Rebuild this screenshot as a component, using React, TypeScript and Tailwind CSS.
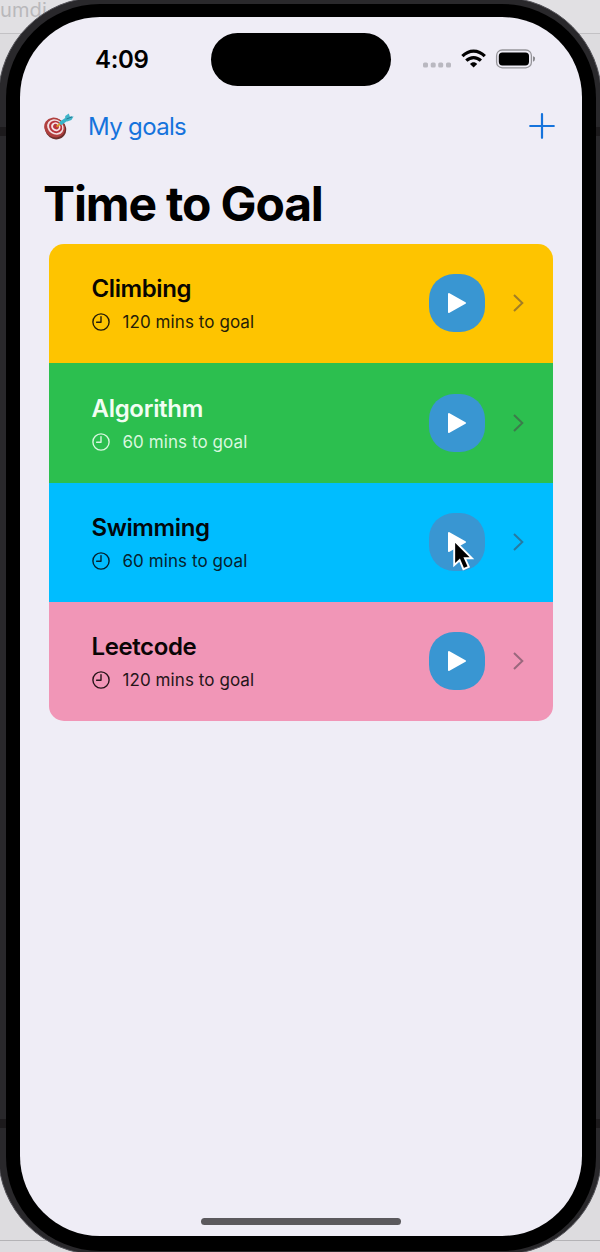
type Goal = {
  name: string;
  minutes: number;
  row: string;
  text: string;
  title: string;
};

const goals: Goal[] = [
  { name: "Climbing", minutes: 120, row: "h-[119px] bg-[#fec400]", text: "text-[#251d08]", title: "text-[#080602] tracking-[-0.4px]" },
  { name: "Algorithm", minutes: 60, row: "h-[120px] bg-[#2cbf4f]", text: "text-[#d9f7df]", title: "text-[#f2fdf3] tracking-[-0.3px]" },
  { name: "Swimming", minutes: 60, row: "h-[119px] bg-[#00bdff]", text: "text-[#06222e]", title: "text-[#02080c] tracking-[-0.4px]" },
  { name: "Leetcode", minutes: 120, row: "h-[119px] bg-[#f196b7]", text: "text-[#251519]", title: "text-[#0a0506] tracking-[-0.4px]" },
];

function TargetIcon() {
  return (
    <svg width="32" height="28" viewBox="0 0 32 28">
      <ellipse cx="12.6" cy="16" rx="10.8" ry="10.2" transform="rotate(35 12.6 16)" fill="#6d2f2c" />
      <ellipse cx="11.6" cy="14.6" rx="10.8" ry="9.6" transform="rotate(35 11.6 14.6)" fill="#b0403f" />
      <ellipse cx="12.4" cy="14" rx="8.6" ry="7.4" transform="rotate(35 12.4 14)" fill="#f3dfe2" />
      <ellipse cx="12.6" cy="13.9" rx="6.9" ry="5.9" transform="rotate(35 12.6 13.9)" fill="#b8343c" />
      <ellipse cx="12.8" cy="13.8" rx="4.9" ry="4.2" transform="rotate(35 12.8 13.8)" fill="#f5e3e6" />
      <ellipse cx="13" cy="13.7" rx="3" ry="2.5" transform="rotate(35 13 13.7)" fill="#b8343c" />
      <path d="M13.6 13.8L18.5 9.8" stroke="#d99a2b" strokeWidth="1.8" />
      <path d="M17 10.8L25 5.2" stroke="#35b4c9" strokeWidth="3.6" />
      <path d="M22.2 7L22.2 3L25.8 .6L26.8 3.4L30.6 3.4L28.4 7L24.2 8.4Z" fill="#3fb4c9" />
      <path d="M23.5 6L29 3.9" stroke="#246f8b" strokeWidth="0.9" />
    </svg>
  );
}

function ClockIcon() {
  return (
    <svg width="18" height="18" viewBox="0 0 18 18" fill="none" stroke="currentColor" strokeWidth="1.4" strokeLinecap="round" strokeLinejoin="round">
      <circle cx="9" cy="9" r="8.1" />
      <path d="M9 3.6V9.3H4.6" />
    </svg>
  );
}

function StatusIcons() {
  return (
    <svg width="114" height="22" viewBox="0 0 114 22">
      <g fill="#b9b8c0">
        <rect x="1" y="14.5" width="5" height="5" rx="1.6" />
        <rect x="8.7" y="14.5" width="5" height="5" rx="1.6" />
        <rect x="16.2" y="14.5" width="5" height="5" rx="1.6" />
        <rect x="24" y="14.5" width="5" height="5" rx="1.6" />
      </g>
      <g fill="none" stroke="#000" strokeWidth="3.2">
        <path d="M40.4 8.2C47 1.4 56.2 1.4 62.8 8.2" />
        <path d="M44.3 12.7C48.6 8.5 54.6 8.5 58.9 12.7" />
      </g>
      <path d="M48 15.9C50 13.8 53.2 13.8 55.2 15.9L51.6 19.5Z" />
      <rect x="74.6" y="2" width="34.8" height="17.8" rx="5.6" fill="none" stroke="#96959a" strokeWidth="1.3" />
      <rect x="76.8" y="4.4" width="30.2" height="13" rx="3.6" />
      <path d="M111 8.2Q113.6 8.8 113 11Q113 13.2 111 13.8Z" fill="#8b8a8f" />
    </svg>
  );
}

function Cursor() {
  return (
    <svg className="absolute left-[23px] top-[25px]" width="24" height="34" viewBox="0 0 24 34">
      <path d="M2.2 2.5V27.2L7.6 22.2L11.4 31.2L16.8 28.8L12.9 20.3H20Z" fill="#000" stroke="#fff" strokeWidth="1.9" strokeLinejoin="miter" />
    </svg>
  );
}

function GoalRow({ goal, pointed }: { goal: Goal; pointed: boolean }) {
  return (
    <li className={`flex items-center pl-[43px] pr-[29px] ${goal.row}`}>
      <div className="flex flex-1 flex-col gap-[6px] pt-[2px]">
        <h2 className={`text-[24px] leading-[30px] font-semibold ${goal.title}`}>{goal.name}</h2>
        <p className={`flex items-center gap-[13px] text-[17px] leading-[24px] tracking-[0.08px] ${goal.text}`}>
          <ClockIcon />
          <span className="whitespace-nowrap">{goal.minutes} mins to goal</span>
        </p>
      </div>
      <button aria-label="Start" className="relative flex h-[58px] w-[56px] items-center justify-center rounded-[25px] bg-[#3996d2]">
        <svg width="20" height="22" viewBox="0 0 20 22">
          <path d="M2 2L18 11L2 20Z" fill="#fff" stroke="#fff" strokeWidth="2" strokeLinejoin="round" />
        </svg>
        {pointed && <Cursor />}
      </button>
      <svg className="ml-[28px]" width="11" height="18" viewBox="0 0 11 18" fill="none" stroke="#4a3e48" strokeOpacity=".52" strokeWidth="2">
        <path d="M1 1L9.3 9L1 17" />
      </svg>
    </li>
  );
}

export default function App() {
  return (
    <div className="relative h-[1252px] w-[600px] overflow-hidden bg-[#dddcdf] font-['Inter',sans-serif]">
      <div className="absolute top-0 left-0 h-[34px] w-full border-b border-[#c3c2c5] bg-[#e1e0e3]">
        <span className="block text-[20px] leading-[20px] tracking-[0.1px] text-[#b9b8bb]">umdi</span>
      </div>
      <div className="absolute bottom-0 left-0 h-[12px] w-full border-t border-[#b4b3b6]" />
      <div className="relative -mt-[3px] -ml-[2px] h-[1258px] w-[604px] rounded-[100px] border border-[#55545a] bg-[#29282b] pt-[6px] pr-[5px] pb-[3px] pl-[7px]">
        <div className="absolute top-[129px] left-0 h-[9px] w-full bg-[#1c1a1c]" />
        <div className="absolute top-[1121px] left-0 h-[9px] w-full bg-[#1c1a1c]" />
        <div className="relative h-full rounded-[94px] bg-black pt-[13px] pr-[14px] pb-[15px] pl-[14px]">
          <main className="relative flex h-full flex-col rounded-[80px] bg-[#efedf6]">
            <header className="flex h-[84px] items-start justify-between pt-[16px] pr-[46px] pl-[75px]">
              <time className="w-[116px] pt-[12px] text-[24px] leading-[30px] font-semibold tracking-[-0.35px]">4:09</time>
              <div className="-ml-[1px] h-[53px] w-[180px] rounded-full bg-black" />
              <div className="pt-[15px] pl-[30px]"><StatusIcons /></div>
            </header>
            <nav className="flex h-[52px] items-center pr-[27px] pl-[23px] text-[#1573dc]">
              <TargetIcon />
              <a className="ml-[13px] flex-1 text-[24px] leading-[30px] tracking-[-0.65px]">My goals</a>
              <svg className="-mt-[2px]" width="26" height="26" viewBox="0 0 26 26" stroke="currentColor" strokeWidth="2.2" strokeLinecap="round">
                <path d="M13 1.2V24.8M1.2 13H24.8" />
              </svg>
            </nav>
            <h1 className="mt-[21px] h-[69.5px] pl-[23px] text-[48px] leading-[60px] font-bold tracking-[-1.15px]">Time to Goal</h1>
            <ul className="mr-[29px] ml-[28.5px] overflow-hidden rounded-[15px]">
              {goals.map((goal) => (
                <GoalRow key={goal.name} goal={goal} pointed={goal.name === "Swimming"} />
              ))}
            </ul>
            <div className="mx-auto mt-auto mb-[11px] h-[7px] w-[200px] rounded-full bg-[#5b595d]" />
          </main>
        </div>
      </div>
    </div>
  );
}
